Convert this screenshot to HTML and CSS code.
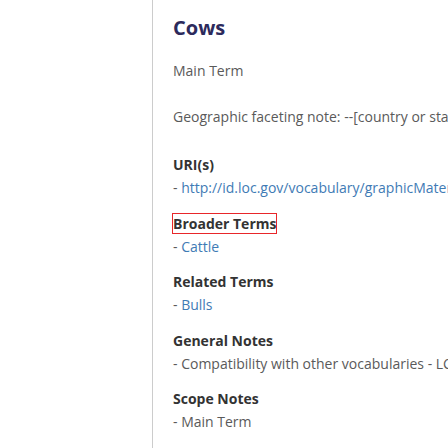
FILE: index.html
```html
<!DOCTYPE html>
<html lang="en">
<head>
<meta charset="utf-8">
<title>Cows</title>
<link rel="stylesheet" href="styles.css">
</head>
<body>
<div class="layout">
  <aside class="sidebar"></aside>
  <main class="content">
    <h1 class="title">Cows</h1>
    <p class="type">Main Term</p>
    <p class="note">Geographic faceting note: --[country or state]--[city]</p>
    <section class="field">
      <h2 class="field-label"><span>URI(s)</span></h2>
      <div class="field-item">- <a href="#">http://id.loc.gov/vocabulary/graphicMaterials/tgm002479</a></div>
    </section>
    <section class="field">
      <h2 class="field-label"><span class="focused">Broader Terms</span></h2>
      <div class="field-item">- <a href="#">Cattle</a></div>
    </section>
    <section class="field">
      <h2 class="field-label"><span>Related Terms</span></h2>
      <div class="field-item">- <a href="#">Bulls</a></div>
    </section>
    <section class="field">
      <h2 class="field-label"><span>General Notes</span></h2>
      <div class="field-item">- Compatibility with other vocabularies - LCSH</div>
    </section>
    <section class="field">
      <h2 class="field-label"><span>Scope Notes</span></h2>
      <div class="field-item">- Main Term</div>
    </section>
  </main>
</div>
</body>
</html>
```

FILE: styles.css
```css
html, body {
  margin: 0;
  padding: 0;
  background: #ffffff;
}

body {
  font-family: "Open Sans", "Liberation Sans", sans-serif;
  font-size: 14px;
  font-weight: 400;
  font-variation-settings: "wght" 400;
  color: #5a5a5a;
  overflow: hidden;
}

.layout {
  display: flex;
  height: 448px;
  width: 448px;
  overflow: hidden;
}

.sidebar {
  flex: 0 0 152px;
  border-right: 1px solid #cccccc;
}

.content {
  flex: 1 1 auto;
  min-width: 0;
  padding: 14px 0 0 20px;
  white-space: nowrap;
  overflow: hidden;
}

.title {
  margin: 0;
  font-size: 20px;
  line-height: 27px;
  font-weight: 700;
  font-variation-settings: "wght" 700;
  color: #2c2a5c;
}

.type {
  margin: 18px 0 0;
  line-height: 24px;
}

.note {
  margin: 22px 0 0;
  line-height: 24px;
}

.field {
  margin-top: 12.6px;
}

.type + .note + .field {
  margin-top: 25px;
}

.field-label {
  margin: 0;
  font-size: 14px;
  line-height: 22px;
  font-weight: 700;
  font-variation-settings: "wght" 700;
  color: #333333;
}

.focused {
  outline: 1px solid #e8262a;
}

.field-item {
  line-height: 24px;
}

.field-item a {
  color: #3f7bb5;
  text-decoration: none;
}
```
